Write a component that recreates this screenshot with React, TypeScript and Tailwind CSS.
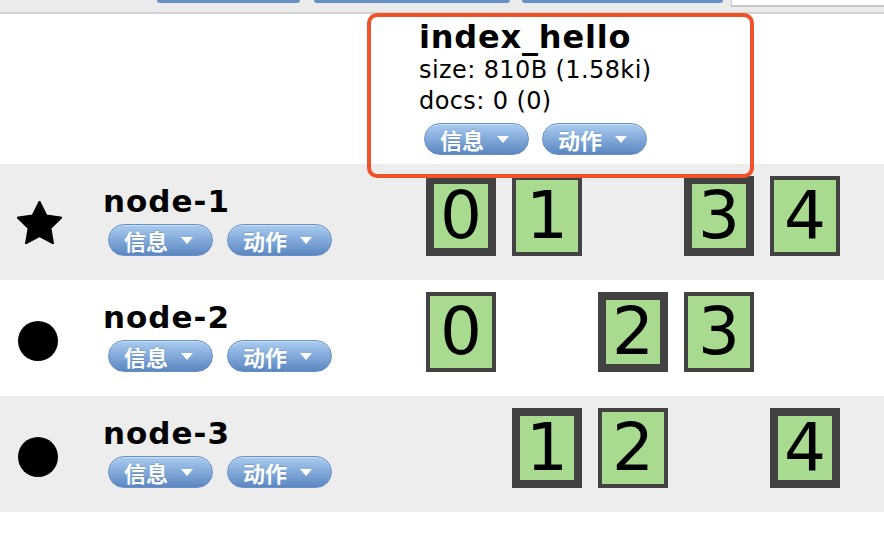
import React from "react";

const nodes = [
  { name: "node-1", master: true, shards: [{ n: 0, p: true }, { n: 1, p: false }, null, { n: 3, p: true }, { n: 4, p: false }] },
  { name: "node-2", master: false, shards: [{ n: 0, p: false }, null, { n: 2, p: true }, { n: 3, p: false }, null] },
  { name: "node-3", master: false, shards: [null, { n: 1, p: true }, { n: 2, p: false }, null, { n: 4, p: true }] },
];

function Caret() {
  return (
    <svg width="12" height="7" viewBox="0 0 12 7" className="shrink-0">
      <path d="M0 0 L12 0 L6 7 Z" fill="#fff" />
    </svg>
  );
}

function PillButton({ label }: { label: string }) {
  return (
    <div className="h-[32px] w-[105px] rounded-full border border-[#6a8ec6] bg-linear-to-b from-[#aacdf0] to-[#5b87c1] flex items-center pl-[15px] gap-[13px] shadow-[inset_0_1px_0_rgba(255,255,255,0.4)]">
      <span className="text-white font-bold text-[22px] leading-none font-['Noto_Sans_CJK_SC',sans-serif] [text-shadow:0_-1px_0_rgba(0,0,0,0.15)]">
        {label}
      </span>
      <Caret />
    </div>
  );
}

function Star() {
  return (
    <svg width="45" height="43" viewBox="2 2 20 19.1" className="mt-[37px] ml-[17px]">
      <polygon
        points="12,2 15.09,8.26 22,9.27 17,14.14 18.18,21.02 12,17.77 5.82,21.02 7,14.14 2,9.27 8.91,8.26"
        fill="#000"
        stroke="#000"
        strokeWidth="0.6"
        strokeLinejoin="round"
      />
    </svg>
  );
}

function Dot() {
  return <div className="mt-[41px] ml-[18px] w-[40px] h-[40px] rounded-full bg-black" />;
}

function Shard({ n, p }: { n: number; p: boolean }) {
  return (
    <div
      className={`w-[70px] h-[80px] bg-[#a8db90] border-[#424242] flex items-center justify-center ${p ? "border-[8px]" : "border-[4px]"}`}
    >
      <span className="text-[66px] leading-none text-black font-['DejaVu_Sans',sans-serif]">{n}</span>
    </div>
  );
}

export default function App() {
  return (
    <div className="relative w-[884px] h-[540px] bg-white overflow-hidden font-['DejaVu_Sans','Noto_Sans_CJK_SC',sans-serif] text-black">
      {/* top toolbar, cut off */}
      <div className="h-[14px] bg-[#ebebeb] border-b-2 border-[#d2d2d2] flex items-start pl-[157px]">
        <div className="w-[143px] h-[3px] rounded-b-[4px] bg-[#6790c4]" />
        <div className="ml-[14px] w-[196px] h-[3px] rounded-b-[4px] bg-[#6790c4]" />
        <div className="ml-[12px] w-[201px] h-[3px] rounded-b-[4px] bg-[#6790c4]" />
        <div className="ml-[8px] flex-1 h-[7px] bg-white border-l border-b-2 border-[#c8c8c8]" />
      </div>

      {/* index header */}
      <div className="h-[150px] pl-[419px] pt-[7px]">
        <div className="text-[32px] leading-[32px] font-bold tracking-[0.8px]">index_hello</div>
        <div className="mt-[2px] text-[24px] leading-[31px] tracking-[0.4px]">size: 810B (1.58ki)</div>
        <div className="text-[24px] leading-[31px] tracking-[0.4px]">docs: 0 (0)</div>
        <div className="mt-[6px] ml-[5px] flex gap-[13px]">
          <PillButton label="信息" />
          <PillButton label="动作" />
        </div>
      </div>

      {nodes.map((node, i) => (
        <div key={node.name} className={`h-[116px] flex ${i % 2 === 0 ? "bg-[#ededed]" : "bg-white"}`}>
          <div className="w-[103px] shrink-0">{node.master ? <Star /> : <Dot />}</div>
          <div className="w-[323px] shrink-0 pt-[22px]">
            <div className="text-[31px] leading-[31px] font-bold tracking-[1px]">{node.name}</div>
            <div className="mt-[7px] ml-[5px] flex gap-[14px]">
              <PillButton label="信息" />
              <PillButton label="动作" />
            </div>
          </div>
          <div className="flex gap-[16px] pt-[12px]">
            {node.shards.map((s, j) =>
              s ? <Shard key={j} n={s.n} p={s.p} /> : <div key={j} className="w-[70px] h-[80px]" />
            )}
          </div>
        </div>
      ))}

      {/* highlight annotation */}
      <div className="absolute left-[367px] top-[13px] w-[387px] h-[165px] border-[4px] border-[#f0532a] rounded-[10px]" />
    </div>
  );
}
